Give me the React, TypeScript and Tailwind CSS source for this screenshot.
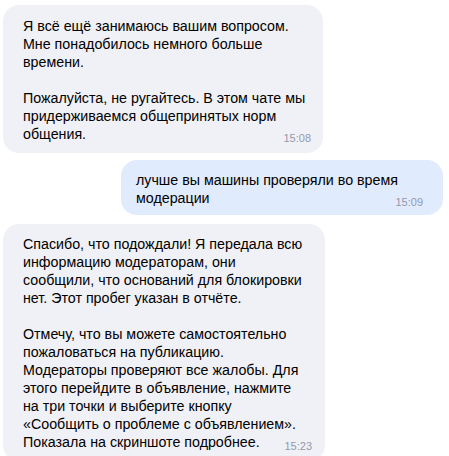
import React from "react";

function Time({ t }: { t: string }) {
  return (
    <span className="float-right ml-3 mt-[7px] text-[11px] leading-[13px] text-[#929aab]">
      {t}
    </span>
  );
}

export default function App() {
  return (
    <div className="w-[449px] h-[456px] overflow-hidden bg-white font-['Liberation_Sans',Arial,sans-serif] text-[14.25px] leading-[18px] text-black">
      <div className="flex flex-col pt-[5px] pl-[3px] pr-[6px]">
        <div className="self-start w-[320px] rounded-[16px] bg-[#f0f1f6] pl-[20px] pr-[12px] pt-[12px] pb-[8px]">
          <p className="whitespace-nowrap">
            Я всё ещё занимаюсь вашим вопросом.
            <br />
            Мне понадобилось немного больше
            <br />
            времени.
          </p>
          <p className="mt-[18px] whitespace-nowrap flow-root">
            Пожалуйста, не ругайтесь. В этом чате мы
            <br />
            придерживаемся общепринятых норм
            <br />
            общения.
            <Time t="15:08" />
          </p>
        </div>

        <div className="self-end mt-[7px] w-[322px] rounded-[16px] bg-[#e0ebfd] pl-[15px] pr-[20px] pt-[11px] pb-[6px]">
          <p className="whitespace-nowrap flow-root">
            лучше вы машины проверяли во время
            <br />
            модерации
            <Time t="15:09" />
          </p>
        </div>

        <div className="self-start mt-[9px] w-[322px] rounded-[16px] bg-[#f0f1f6] pl-[20px] pr-[13px] pt-[11px] pb-[8px]">
          <p className="whitespace-nowrap">
            Спасибо, что подождали! Я передала всю
            <br />
            информацию модераторам, они
            <br />
            сообщили, что оснований для блокировки
            <br />
            нет. Этот пробег указан в отчёте.
          </p>
          <p className="mt-[18px] whitespace-nowrap flow-root">
            Отмечу, что вы можете самостоятельно
            <br />
            пожаловаться на публикацию.
            <br />
            Модераторы проверяют все жалобы. Для
            <br />
            этого перейдите в объявление, нажмите
            <br />
            на три точки и выберите кнопку
            <br />
            «Сообщить о проблеме с объявлением».
            <br />
            Показала на скриншоте подробнее.
            <Time t="15:23" />
          </p>
        </div>
      </div>
    </div>
  );
}
